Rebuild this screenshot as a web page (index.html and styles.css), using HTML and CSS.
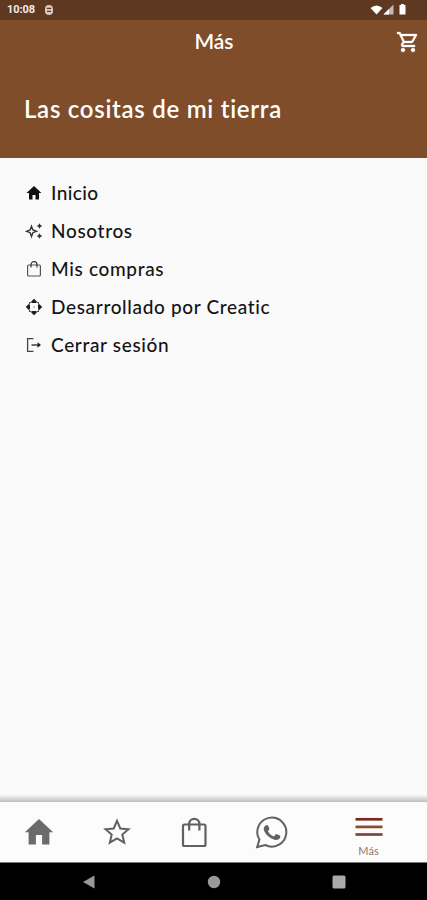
FILE: index.html
```html
<!DOCTYPE html>
<html lang="es">
<head>
<meta charset="utf-8">
<meta name="viewport" content="width=device-width, initial-scale=1">
<title>Las cositas de mi tierra</title>
<link rel="stylesheet" href="styles.css">
</head>
<body>
<div class="statusbar">
  <span class="clock">10:08</span>
  <svg class="debug" width="10" height="12" viewBox="0 0 10 12"><rect x="1" y="1" width="8" height="10" rx="4" fill="#d9c9bf"/><path d="M2.8 4.4h4.4M3 7.4h4" stroke="#5c3822" stroke-width="1.3"/></svg>
  <svg class="signals" width="38" height="14" viewBox="0 0 38 14" fill="#fff"><path d="M0.5 5Q6.500 0 12.500 5L6.500 11.500Z"/><path d="M13.500 11.500 23.500 1.500V11.500Z" opacity=".65"/><path d="M13.500 11.500 19 6V11.500Z"/><path d="M31 1h3v1h1.500v9.500h-6V2H31Z"/></svg>
</div>
<header class="header">
  <div class="appbar">
    <h1 class="page-title">Más</h1>
    <svg class="cart" width="24" height="24" viewBox="0 0 24 24" fill="#fff" stroke="#fff" stroke-width=".3"><path d="M15.550 13c.75 0 1.410-.41 1.750-1.030l3.580-6.490A.996.996 0 0 0 20.010 4H5.210l-.94-2H1v2h2l3.600 7.590-1.350 2.440C4.520 15.370 5.480 17 7 17h12v-2H7l1.100-2h7.450zM6.160 6h12.150l-2.760 5H8.530L6.160 6zM7 18c-1.100 0-1.990.9-1.990 2S5.900 22 7 22s2-.9 2-2-.9-2-2-2zm10 0c-1.100 0-1.990.9-1.990 2s.89 2 1.990 2 2-.9 2-2-.9-2-2-2z"/></svg>
  </div>
  <h2 class="shop-name">Las cositas de mi tierra</h2>
</header>
<main class="content">
  <ul class="menu">
    <li class="item"><svg viewBox="0 0 18 18"><path d="M9 2 1.500 9H4v6.500h3.500V11h3v4.500H14V9h2.500Z" fill="#111"/></svg><span class="short">Inicio</span></li>
    <li class="item"><svg viewBox="0 0 18 18"><path d="M6.500 4.200 7.900 7.900 11.500 9.300 7.900 10.700 6.500 14.400 5.100 10.700 1.500 9.300 5.100 7.900Z" fill="none" stroke="#333" stroke-width="1.400"/><path d="m14.500 1.200 1 1.800 1.800 1-1.800 1-1 1.800-1-1.800-1.800-1 1.800-1ZM14.500 11.200l1 1.800 1.800 1-1.800 1-1 1.800-1-1.800-1.800-1 1.800-1Z" fill="#333"/></svg><span>Nosotros</span></li>
    <li class="item"><svg viewBox="0 0 18 18" fill="none" stroke="#555" stroke-width="1.200"><rect x="2.600" y="5" width="12.800" height="11" rx="1"/><path d="M6 7.500V4.700a3 3 0 0 1 6 0v2.800" stroke="#333"/></svg><span>Mis compras</span></li>
    <li class="item"><svg viewBox="0 0 18 18" fill="none" stroke="#222"><path d="M4.500 6.500v-2h2M11.500 4.500h2v2M13.500 11.500v2h-2M6.500 13.500h-2v-2" stroke="#555" stroke-width="1.100"/><path d="M9 .8 12 3.800 10.800 5H7.200L6 3.800ZM9 17.200l3-3L10.800 13H7.200L6 14.200ZM.8 9l3-3L5 7.200v3.600L3.800 12ZM17.200 9l-3-3L13 7.200v3.600l1.200 1.200Z" fill="#1c1c1c" stroke="none"/><circle cx="9" cy="9" r=".8" fill="#888" stroke="none"/></svg><span>Desarrollado por Creatic</span></li>
    <li class="item"><svg viewBox="0 0 18 18" fill="none" stroke="#444" stroke-width="1.300"><path d="M8.500 2.600H2.600v12.800h5.900M6.500 9h8"/><path d="m12.500 6.300 3.500 2.700-3.500 2.700Z" fill="#222" stroke="none"/></svg><span>Cerrar sesión</span></li>
  </ul>
</main>
<div class="shade"></div>
<nav class="tabs">
  <a class="tab"><svg width="30" height="28" viewBox="0 0 30 28"><path d="M15 1 .8 14.200H4.600V26.500h7.300V17h6.200v9.500h7.300V14.200h3.800Z" fill="#6b6b6b"/></svg></a>
  <a class="tab"><svg width="28" height="28" viewBox="0 0 28 28"><path d="m14 2.800 3.300 7.700 8.200.7-6.200 5.400 1.900 8L14 20.300l-7.200 4.300 1.900-8-6.200-5.400 8.200-.7Z" fill="none" stroke="#616161" stroke-width="2"/></svg></a>
  <a class="tab"><svg width="28" height="32" viewBox="0 0 28 32" fill="none" stroke="#616161" stroke-width="2.200"><rect x="3" y="8.500" width="22.500" height="21.500" rx="1.500"/><path d="M9.200 14.500V8a5.100 5.100 0 0 1 10.200 0v6.500"/></svg></a>
  <a class="tab"><svg width="34" height="34" viewBox="0 0 34 34"><path d="M2.200 32 4.400 24.600A14.500 14.500 0 1 1 10.200 30Z" fill="none" stroke="#616161" stroke-width="2"/><path d="M10.300 10.800c.9-1 2.300-1.200 2.800-.1l1.200 2.800c.3.800-.2 1.300-1.400 2.700 1.400 2.600 3.200 4.100 5.900 5.300l1.900-2.100c.4-.5.8-.4 1.300-.2l2.700 1.400c1 .5.600 1.800.1 2.700-1 1.500-3.500 2-5.400 1.400-5-1.400-8.200-4.600-10.200-8.700-.9-2-.4-3.900 1.100-5.200Z" fill="#616161"/></svg></a>
  <a class="tab more"><svg width="28" height="20" viewBox="0 0 28 20"><path d="M.5 2.300h27" stroke="#7a2a20" stroke-width="2.700"/><path d="M.5 9.900h27" stroke="#8f492b" stroke-width="2.700"/><path d="M.5 17.500h27" stroke="#7b4437" stroke-width="2.700"/></svg><span class="tab-label">Más</span></a>
</nav>
<div class="sysnav">
  <svg width="14" height="14" viewBox="0 0 14 14"><path d="M1 7 12.500.5v13Z" fill="#999"/></svg>
  <svg width="14" height="14" viewBox="0 0 14 14"><circle cx="7" cy="7" r="6.200" fill="#999"/></svg>
  <svg width="14" height="14" viewBox="0 0 14 14"><rect x=".5" y=".5" width="13" height="13" rx="1.500" fill="#aaa"/></svg>
</div>
</body>
</html>
```
FILE: styles.css
```css
* { box-sizing: border-box; }
body {
  margin: 0;
  height: 900px;
  display: flex;
  flex-direction: column;
  background: #fafafa;
  font-family: Lato, "Open Sans", sans-serif;
  overflow: hidden;
}
svg { display: block; flex: none; }
.statusbar {
  height: 20px;
  flex: none;
  display: flex;
  align-items: center;
  padding: 0 19px 0 7px;
  background: #5f3821;
}
.clock {
  width: 37px;
  font: 700 11px/20px Roboto, sans-serif;
  letter-spacing: -.1px;
  color: #f5ece6;
}
.signals { margin-left: auto; }
.header {
  height: 138px;
  flex: none;
  background: #7f4d2a;
  color: #fff;
}
.appbar {
  height: 44px;
  display: grid;
  grid-template-columns: 1fr auto 1fr;
  align-items: center;
  padding: 0 7px 0 8px;
}
.page-title {
  grid-column: 2;
  margin: 0;
  font-size: 21px;
  font-weight: 600;
  line-height: 42px;
  padding-bottom: 2px;
}
.cart { justify-self: end; }
.shop-name {
  margin: 29px 0 0 24px;
  font-size: 24px;
  font-weight: 600;
  line-height: 32px;
  letter-spacing: .72px;
  white-space: nowrap;
}
.content { flex: 1; }
.menu {
  margin: 0;
  padding: 16px 0 0 25px;
  list-style: none;
}
.item {
  height: 38px;
  display: flex;
  align-items: center;
  gap: 8px;
  font-size: 19px;
  font-weight: 500;
  letter-spacing: .66px;
  white-space: nowrap;
  color: #151515;
}
.item svg { width: 18px; height: 18px; }
.item span { padding-bottom: 2px; }
.short { letter-spacing: .4px; }
.shade {
  height: 7px;
  flex: none;
  background: linear-gradient(#f7f7f7, #bdbdbd);
}
.tabs {
  height: 60px;
  flex: none;
  display: grid;
  grid-template-columns: 78px 77px 78px 77px 117px;
  background: #fcfcfc;
}
.tab {
  display: flex;
  align-items: center;
  justify-content: center;
}
.more {
  flex-direction: column;
  gap: 7px;
  padding-top: 10px;
}
.tab-label {
  font-size: 11px;
  line-height: 14px;
  color: #8d7770;
}
.sysnav {
  height: 38px;
  flex: none;
  display: flex;
  gap: 111px;
  padding: 12px 0 0 82px;
  border-top: 1px solid #777;
  background: #000;
}
```
